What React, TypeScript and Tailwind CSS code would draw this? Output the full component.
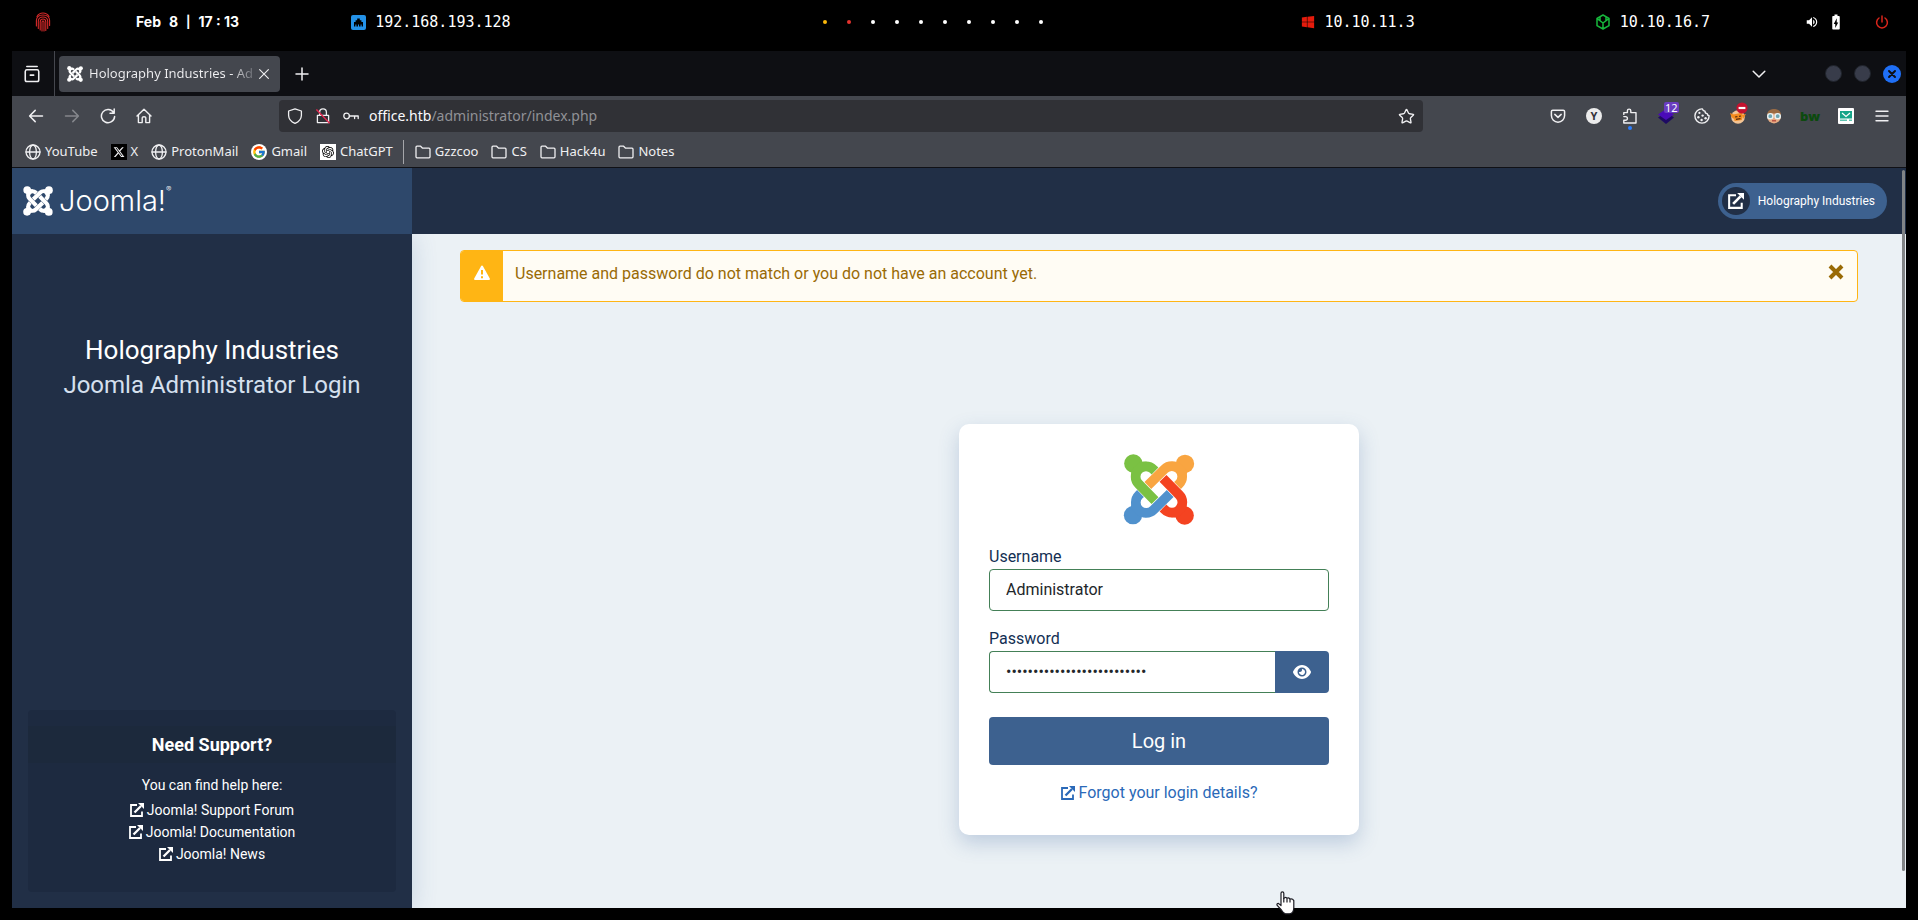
import React, { useState } from "react";
import { Star } from "lucide-react";
import { FaWindows, FaEye, FaXTwitter } from "react-icons/fa6";
import { FcGoogle } from "react-icons/fc";
import { SiOpenai } from "react-icons/si";
import { MdBatteryChargingFull, MdVolumeUp } from "react-icons/md";

type IconProps = { className?: string };

function Line({ className = "size-4", children }: IconProps & { children: React.ReactNode }) {
  return (
    <svg
      viewBox="0 0 16 16"
      className={className}
      fill="none"
      stroke="currentColor"
      strokeWidth="1.3"
      strokeLinecap="round"
      strokeLinejoin="round"
      aria-hidden="true"
    >
      {children}
    </svg>
  );
}

function JoomlaMark({ className, mono = false }: IconProps & { mono?: boolean }) {
  const parts = [
    { color: "#7ac143", turn: 0 },
    { color: "#f9a541", turn: 90 },
    { color: "#f44321", turn: 180 },
    { color: "#5091cd", turn: 270 },
  ];
  return (
    <svg viewBox="-2 0 214 213" className={className} aria-hidden="true">
      {parts.map(({ color, turn }) => (
        <g key={turn} transform={`rotate(${turn} 105 106.5)`}>
          <circle cx="28" cy="28.5" r="27.5" fill={mono ? "#fff" : color} />
          <path d="M50 20Q56 25 68 23L60 50 30 60 22 68Q25 57 20 50Z" fill={mono ? "#fff" : color} />
          <path
            d="M93 51L88 46A31 31 0 1 0 44 90L93 140"
            fill="none"
            stroke={mono ? "#fff" : color}
            strokeWidth="29"
          />
        </g>
      ))}
    </svg>
  );
}

function ExternalIcon({ className = "size-3.5" }: IconProps) {
  return (
    <svg viewBox="0 0 14 14" className={className} fill="none" stroke="currentColor" aria-hidden="true">
      <path d="M7 2H1V13H12V8.5" strokeWidth="1.8" />
      <path d="M4.5 9.5L11 3" strokeWidth="2.3" />
      <path d="M8 0H14V6Z" fill="currentColor" stroke="none" />
    </svg>
  );
}

function GlobeIcon() {
  return (
    <Line>
      <circle cx="8" cy="8" r="7" />
      <ellipse cx="8" cy="8" rx="3.4" ry="7" />
      <path d="M1 8H15" />
    </Line>
  );
}

function FolderIcon() {
  return (
    <Line>
      <path d="M1 12.8V3.2Q1 2.2 2 2.2H5.6L7.6 4.2H14Q15 4.2 15 5.2V12.8Q15 13.8 14 13.8H2Q1 13.8 1 12.8Z" />
    </Line>
  );
}

function StatusBar() {
  const dots = ["bg-[#fbb80a]", "bg-[#e5322d]", "bg-white", "bg-white", "bg-white", "bg-white", "bg-white", "bg-white", "bg-white", "bg-white"];
  return (
    <header className="flex h-[51px] items-start text-white">
      <div className="flex h-11 flex-1 items-center pl-[35px]">
        <svg viewBox="0 0 16 20" className="h-5 w-4 text-[#d62a2a]" fill="none" stroke="currentColor" strokeWidth="1.1" strokeLinecap="round" aria-label="Menu">
          <path d="M2 4.5Q4 1 8 1T14 4.5" />
          <path d="M1.4 14V8.5Q1.6 3 8 3T14.6 8.5V13.5" />
          <path d="M3.3 16.5V9Q3.6 5 8 5T12.7 9V16.5" />
          <path d="M5.2 18V9.6Q5.4 7 8 7T10.8 9.6V18.4" />
          <path d="M7 19V10Q7.2 9 8 9T9 10V19" />
        </svg>
        <time className="ml-[85px] flex gap-2 font-['Inter'] text-sm font-bold whitespace-nowrap">
          <span>Feb</span>
          <span>8</span>
          <span className="text-xs leading-5">|</span>
          <span>17 : 13</span>
        </time>
        <div className="ml-28 flex items-center gap-[9px]">
          <svg viewBox="0 0 15 15" className="size-[15px]" aria-hidden="true">
            <rect width="15" height="15" rx="2" fill="#2492e8" />
            <path d="M3 11.5V7H4.6V5.2H6.2V3.5H8.8V5.2H10.4V7H12V11.5H10.6V9.5H9.6V11.5H8V9.5H7V11.5H5.4V9.5H4.4V11.5Z" fill="#000" />
          </svg>
          <span className="font-['DejaVu_Sans_Mono'] text-[15px]">192.168.193.128</span>
        </div>
      </div>
      <div className="mr-[58px] flex h-11 items-center gap-5">
        {dots.map((color, i) => (
          <span key={i} className={`size-1 rounded-full ${color}`} />
        ))}
      </div>
      <div className="flex h-11 flex-1 items-center justify-end pr-[29px]">
        <div className="flex items-center gap-[9px]">
          <FaWindows className="size-3.5 text-[#e51b0c]" aria-hidden="true" />
          <span className="font-['DejaVu_Sans_Mono'] text-[15px]">10.10.11.3</span>
        </div>
        <div className="ml-[180px] flex items-center gap-[9px]">
          <svg viewBox="0 0 16 16" className="size-4 text-[#17b83c]" fill="none" stroke="currentColor" strokeWidth="1.5" strokeLinejoin="round" aria-hidden="true">
            <path d="M8 1L14 4.3V11.7L8 15 2 11.7V4.3ZM8 9V15M8 9L2.2 4.6M8 9L13.8 4.6M5 6.5V3M11 6.5V3" />
          </svg>
          <span className="font-['DejaVu_Sans_Mono'] text-[15px]">10.10.16.7</span>
        </div>
        <MdVolumeUp className="ml-[95px] size-3.5" aria-label="Volume" />
        <MdBatteryChargingFull className="ml-2 size-[18px]" aria-label="Battery" />
        <svg viewBox="0 0 14 14" className="ml-[30px] size-3.5 text-[#d9251b]" fill="none" stroke="currentColor" strokeWidth="1.5" strokeLinecap="round" aria-label="Power">
          <path d="M4 3A5.4 5.4 0 1 0 10 3M7 1V7" />
        </svg>
      </div>
    </header>
  );
}

function TabStrip() {
  return (
    <div className="flex h-[45px] items-center bg-[#0e0f13] pr-[5px]">
      <button aria-label="Recent browsing" className="flex h-full w-[42px] items-center justify-center pr-1.5 pl-1">
        <Line className="size-[18px]">
          <path d="M3.4 1.4H12.6M2 5.8Q2.2 4.2 3.4 4.2H12.6Q13.8 4.2 14 5.8V13Q14 14.6 12.6 14.6H3.4Q2 14.6 2 13ZM6.5 9H9.5" strokeWidth="1.4" />
        </Line>
      </button>
      <span className="h-full w-px bg-[#45474e]" />
      <div className="ml-1 flex h-9 w-[221px] items-center rounded bg-[#44474e] pl-2">
        <JoomlaMark mono className="size-4 shrink-0" />
        <span className="ml-1.5 flex-1 bg-linear-to-r from-[#f0f0f2] from-85% to-[#5c5f66] bg-clip-text whitespace-nowrap text-transparent">
          Holography Industries - Ad
        </span>
        <button aria-label="Close tab" className="mr-2 flex size-4 shrink-0 items-center justify-center">
          <Line className="size-3.5">
            <path d="M3 3L13 13M13 3L3 13" />
          </Line>
        </button>
      </div>
      <button aria-label="New tab" className="ml-1 flex size-9 items-center justify-center">
        <Line>
          <path d="M8 2V14M2 8H14" strokeWidth="1.5" />
        </Line>
      </button>
      <button aria-label="List all tabs" className="ml-auto flex size-9 items-center justify-center">
        <Line>
          <path d="M2.2 5.2L8 11 13.8 5.2" strokeWidth="1.5" />
        </Line>
      </button>
      <div className="ml-12 flex items-center gap-3">
        <button aria-label="Minimize" className="size-[17px] rounded-full border border-[#20242c] bg-[#383c4a]" />
        <button aria-label="Maximize" className="size-[17px] rounded-full border border-[#20242c] bg-[#383c4a]" />
        <button aria-label="Close window" className="flex size-[18px] items-center justify-center rounded-full bg-[#1f6ff5] text-[#0e0f13]">
          <Line className="size-3">
            <path d="M4 4L12 12M12 4L4 12" strokeWidth="2.6" />
          </Line>
        </button>
      </div>
    </div>
  );
}

function ToolButton({ label, dim = false, children }: { label: string; dim?: boolean; children: React.ReactNode }) {
  return (
    <button aria-label={label} className={`relative flex size-9 shrink-0 items-center justify-center ${dim ? "text-[#85878c]" : ""}`}>
      {children}
    </button>
  );
}

function Toolbar() {
  return (
    <div className="flex h-10 items-center px-1.5">
      <ToolButton label="Back">
        <Line><path d="M14.5 8H1.8M7.2 2.4L1.6 8 7.2 13.6" strokeWidth="1.5" /></Line>
      </ToolButton>
      <ToolButton label="Forward" dim>
        <Line><path d="M1.5 8H14.2M8.8 2.4L14.4 8 8.8 13.6" strokeWidth="1.5" /></Line>
      </ToolButton>
      <ToolButton label="Reload">
        <Line><path d="M13.6 4.6A6.6 6.6 0 1 0 14.6 8.6M14.2 1V5.2H10" strokeWidth="1.5" /></Line>
      </ToolButton>
      <ToolButton label="Home">
        <Line><path d="M1 8L8 1.2 15 8M2.4 7V14.6H6.2V9.8Q6.2 8.8 8 8.8T9.8 9.8V14.6H13.6V7" strokeWidth="1.4" /></Line>
      </ToolButton>
      <div className="mx-[117px] flex h-8 flex-1 items-center rounded bg-[#303136] px-2">
        <Line><path d="M8 .8L14.4 3V7.4Q14.2 12.6 8 15.4 1.8 12.6 1.6 7.4V3Z" /></Line>
        <svg viewBox="0 0 16 16" className="ml-3 size-4" fill="none" aria-label="Connection not secure">
          <path d="M4.6 7V4.2A3.4 3.4 0 0 1 11.4 4.2V7M2.4 7.4H13.6V14.6H2.4Z" stroke="currentColor" strokeWidth="1.3" strokeLinejoin="round" />
          <path d="M1.4 1.6L14.6 15.2" stroke="#e22850" strokeWidth="1.4" />
        </svg>
        <Line className="ml-3 size-4">
          <circle cx="3.6" cy="8" r="2.8" />
          <path d="M6.4 8H15.2V10.6M11.6 8V10.6" />
        </Line>
        <div role="textbox" tabIndex={0} aria-label="Address" className="ml-2.5 flex-1 text-sm text-[#909196]">
          <span className="text-[#fbfbfe]">office.htb</span>/administrator/index.php
        </div>
        <button aria-label="Bookmark this page">
          <Star className="size-[17px]" strokeWidth={1.9} />
        </button>
      </div>
      <ToolButton label="Save to Pocket">
        <Line><path d="M1.4 3.6Q1.4 2.2 2.8 2.2H13.2Q14.6 2.2 14.6 3.6V7.6A6.6 6.6 0 0 1 1.4 7.6ZM4.8 6.4L8 9.4 11.2 6.4" strokeWidth="1.5" /></Line>
      </ToolButton>
      <ToolButton label="Account">
        <span className="flex size-4 items-center justify-center rounded-full bg-[#ececec] text-[11px] font-bold text-[#33343a]">Y</span>
      </ToolButton>
      <ToolButton label="Extensions">
        <Line><path d="M1.8 6.4V4.6H5.4V2.8A1.7 1.7 0 0 1 8.8 2.8V4.6H14V15H1.8V12.2H3.6A1.8 1.8 0 0 0 3.6 8.6H1.8" strokeWidth="1.4" /></Line>
        <span className="absolute bottom-1 size-1 rounded-full bg-[#2a7dff]" />
      </ToolButton>
      <ToolButton label="Layers extension">
        <svg viewBox="0 0 16 16" className="size-4" aria-hidden="true">
          <path d="M0 9.5L8 4 16 9.5 8 16Z" fill="#1e0a63" />
          <path d="M0 6.5L8 1 16 6.5 8 12Z" fill="#4a0bb8" />
        </svg>
        <span className="absolute top-1 left-4 rounded-xs bg-[#6a3cc0] px-px text-[11px] leading-[11px] text-white">12</span>
      </ToolButton>
      <ToolButton label="Cookie editor">
        <svg viewBox="0 0 16 16" className="size-4" fill="none" stroke="currentColor" strokeWidth="1.4" strokeLinejoin="round" aria-hidden="true">
          <path d="M8.4 .9A7.1 7.1 0 1 0 15.1 7.8Q13.4 7.6 13.2 5.6 11 5.4 11 3.2 8.8 3 8.4 .9Z" />
          <g fill="currentColor" stroke="none">
            <circle cx="5.4" cy="4.9" r="1.1" />
            <circle cx="8.6" cy="7.6" r="1.2" />
            <circle cx="4.4" cy="9.2" r="1.2" />
            <circle cx="7.6" cy="12" r="1.2" />
            <circle cx="11.6" cy="10.2" r="1.2" />
          </g>
        </svg>
      </ToolButton>
      <ToolButton label="Proxy">
        <svg viewBox="0 0 16 16" className="size-4" aria-hidden="true">
          <circle cx="8" cy="9" r="6.8" fill="#f3c494" />
          <path d="M0 5L5 7 4 11 1.5 9ZM16 6L12 7 13 11Z" fill="#f38a1c" />
          <path d="M3.5 6.5L12.5 4.5 12 12 4.5 13Z" fill="#f58b1f" />
          <path d="M5 9L7.4 8.6M9 8.4L11 8M6 11.4L10.5 10.6" stroke="#5a2d0c" strokeWidth="1.1" />
        </svg>
        <svg viewBox="0 0 12 12" className="absolute top-1 left-4 size-3" aria-hidden="true">
          <circle cx="6" cy="6" r="5.6" fill="#c4122f" />
          <path d="M2.6 6H9.4" stroke="#fff" strokeWidth="2.2" />
        </svg>
      </ToolButton>
      <ToolButton label="User agent">
        <svg viewBox="0 0 16 16" className="size-4" aria-hidden="true">
          <circle cx="8" cy="8.4" r="7" fill="#e5ab83" />
          <path d="M1 8Q1 1 8 1T15 8L12 5.6H4Z" fill="#9a6b43" />
          <circle cx="4.3" cy="8.2" r="2.6" fill="#6fa5b0" stroke="#e9f3f5" strokeWidth="1.4" />
          <circle cx="11.7" cy="8.2" r="2.6" fill="#6fa5b0" stroke="#e9f3f5" strokeWidth="1.4" />
          <path d="M6 12.8H10" stroke="#b3453a" strokeWidth="1.3" />
        </svg>
      </ToolButton>
      <ToolButton label="bw">
        <span className="font-['Open_Sans'] text-[13px] leading-4 font-extrabold text-[#0c4a0e]">bw</span>
      </ToolButton>
      <ToolButton label="Temporary mail">
        <svg viewBox="0 0 16 16" className="size-4" aria-hidden="true">
          <rect width="16" height="16" rx="1" fill="#fff" />
          <path d="M2 3H14V10.5H2Z" fill="#17a589" />
          <path d="M4 5L8 8.4 12 5" fill="none" stroke="#fff" strokeWidth="1.2" />
          <path d="M2 12.2H9M11 12.2H14" stroke="#5fc4b0" strokeWidth="1.4" />
        </svg>
      </ToolButton>
      <ToolButton label="Application menu">
        <Line><path d="M2 3.2H14M2 8H14M2 12.8H14" strokeWidth="1.4" /></Line>
      </ToolButton>
    </div>
  );
}

function Bookmark({ icon, children }: { icon: React.ReactNode; children: React.ReactNode }) {
  return (
    <a href="#" className="flex items-center gap-1">
      {icon}
      {children}
    </a>
  );
}

function BookmarkBar() {
  return (
    <nav aria-label="Bookmarks" className="flex h-8 items-center gap-[13px] border-b border-[#101116] pl-[13px]">
      <Bookmark icon={<GlobeIcon />}>YouTube</Bookmark>
      <Bookmark icon={<span className="flex size-4 items-center justify-center bg-black"><FaXTwitter className="size-3" /></span>}>X</Bookmark>
      <Bookmark icon={<GlobeIcon />}>ProtonMail</Bookmark>
      <Bookmark icon={<span className="flex size-4 items-center justify-center rounded-full bg-white"><FcGoogle className="size-3.5" /></span>}>Gmail</Bookmark>
      <Bookmark icon={<span className="flex size-4 items-center justify-center bg-white text-black"><SiOpenai className="size-3" /></span>}>ChatGPT</Bookmark>
      <span className="-mr-0.5 -ml-[3px] h-6 w-px bg-[#a5a6aa]" />
      <Bookmark icon={<FolderIcon />}>Gzzcoo</Bookmark>
      <Bookmark icon={<FolderIcon />}>CS</Bookmark>
      <Bookmark icon={<FolderIcon />}>Hack4u</Bookmark>
      <Bookmark icon={<FolderIcon />}>Notes</Bookmark>
    </nav>
  );
}

function LoginCard() {
  const [user, setUser] = useState("Administrator");
  const [secret, setSecret] = useState("abcdefghijklmnopqrstuvwxyz");
  return (
    <form
      className="w-[400px] rounded-[10px] bg-white p-[30px] text-[#132f53] shadow-[0_8px_20px_rgba(57,95,155,0.25)]"
      onSubmit={(e) => e.preventDefault()}
    >
      <JoomlaMark className="mx-auto h-[71px] w-[72px]" />
      <label htmlFor="username" className="mt-5 block leading-6">Username</label>
      <input
        id="username"
        value={user}
        onChange={(e) => setUser(e.target.value)}
        className="h-[42px] w-full rounded border border-[#448057] bg-white px-4 text-[#22262a] outline-none"
      />
      <label htmlFor="password" className="mt-4 block leading-6">Password</label>
      <div className="flex">
        <input
          id="password"
          type="password"
          value={secret}
          onChange={(e) => setSecret(e.target.value)}
          className="h-[42px] min-w-0 flex-1 rounded-l border border-r-0 border-[#448057] bg-white px-4 text-[#22262a] outline-none"
        />
        <button type="button" aria-label="Show password" className="flex w-[54px] items-center justify-center rounded-r bg-[#3d618f] text-white">
          <FaEye className="size-[18px]" />
        </button>
      </div>
      <button type="submit" className="mt-6 h-12 w-full rounded bg-[#3d618f] text-xl text-white">Log in</button>
      <a href="#" className="mt-4 flex items-center justify-center gap-1 leading-6 text-[#2a69b8]">
        <ExternalIcon />
        Forgot your login details?
      </a>
    </form>
  );
}

function Sidebar() {
  return (
    <aside className="z-10 flex w-[400px] shrink-0 flex-col bg-[#212f46] text-center text-white shadow-[0_2px_24px_rgba(57,95,155,0.2)]">
      <div className="mt-[98px]">
        <h1 className="text-[26px] leading-9">Holography Industries</h1>
        <p className="text-2xl leading-[34px] text-[#d5e0ee]">Joomla Administrator Login</p>
      </div>
      <section className="m-4 mt-auto rounded bg-[#1d2a40] pt-4 pb-[27px]">
        <h2 className="bg-[#1c293c] text-lg leading-[37px] font-bold">Need Support?</h2>
        <p className="mt-3 text-sm leading-5">You can find help here:</p>
        <ul className="mt-1 text-sm leading-[22px]">
          {["Joomla! Support Forum", "Joomla! Documentation", "Joomla! News"].map((name) => (
            <li key={name}>
              <a href="#" className="flex items-center justify-center gap-[3px]">
                <ExternalIcon />
                {name}
              </a>
            </li>
          ))}
        </ul>
      </section>
    </aside>
  );
}

function JoomlaPage() {
  return (
    <div className="relative flex flex-1 flex-col bg-[#ebf1f5] font-['Roboto',sans-serif] text-base text-white">
      <div className="flex h-[66px] items-center bg-[#212f46]">
        <a href="#" aria-label="Joomla!" className="flex h-full w-[400px] items-center gap-1.5 bg-[#2e486b] pl-[11px]">
          <JoomlaMark mono className="size-[30px]" />
          <span className="flex font-['Inter'] text-[29px] leading-8 font-light">
            Joomla!<sup className="mt-1 text-[8px] leading-none">®</sup>
          </span>
        </a>
        <a href="#" className="mr-[19px] ml-auto flex h-9 items-center gap-2 rounded-full bg-[#3d618f] pr-3 pl-1 text-xs">
          <span className="flex size-7 items-center justify-center rounded-full bg-[#212f46]">
            <ExternalIcon className="size-4" />
          </span>
          Holography Industries
        </a>
      </div>
      <div className="flex flex-1 overflow-hidden">
        <Sidebar />
        <main className="flex flex-1 flex-col px-12 pt-4">
          <div role="alert" className="flex h-[52px] overflow-hidden rounded border border-[#ffb514] bg-[#fffcf4] text-[#996a05]">
            <span className="flex w-[42px] items-center justify-center bg-[#ffb514] pb-1.5 text-white">
              <svg viewBox="0 0 16 16" className="size-4" aria-hidden="true">
                <path d="M8 .6Q8.7.6 9 1.2L15.8 13.6Q16.2 14.9 15 15H1Q-.2 14.9.2 13.6L7 1.2Q7.3.6 8 .6Z" fill="#fff" />
                <path d="M8 5V9.6M8 11.2V13.2" stroke="#ffb514" strokeWidth="2" />
              </svg>
            </span>
            <p className="flex-1 px-3 py-[11px] leading-6">Username and password do not match or you do not have an account yet.</p>
            <button aria-label="Close" className="mr-[13px] mb-2 flex items-center">
              <svg viewBox="0 0 16 16" className="size-4" stroke="#996a05" strokeWidth="4" aria-hidden="true">
                <path d="M2 2L14 14M14 2L2 14" />
              </svg>
            </button>
          </div>
          <div className="flex flex-1 items-center justify-center pt-12">
            <LoginCard />
          </div>
        </main>
      </div>
      <span className="absolute top-0.5 right-px bottom-[37px] w-[3px] rounded-full bg-[#818486]" />
      <svg viewBox="0 0 19 24" className="absolute -bottom-[7px] left-[1264px] h-6 w-[19px]" fill="#fff" stroke="#1b1b22" strokeWidth="1.2" strokeLinejoin="round" aria-hidden="true">
        <path d="M5 14.5V2.2Q5 .8 6.4 .8T7.8 2.2V7.5Q9 5.6 11 7.2 12.6 6.2 14 8 16.6 7.4 17.8 9.6V17Q17.6 22.4 13.6 22.8H9.4Q7.4 22.4 5.4 19L1 14.2Q.6 12.4 2.4 12.4Z" />
        <path d="M7.8 7V11.5M11 7.4V11.5M14 8V11.5" fill="none" />
      </svg>
    </div>
  );
}

export default function App() {
  return (
    <div className="flex min-h-screen flex-col bg-black">
      <StatusBar />
      <div className="mx-3 mb-3 flex flex-1 flex-col bg-[#44474e] font-['Noto_Sans',sans-serif] text-[13px] text-[#f0f0f2]">
        <TabStrip />
        <Toolbar />
        <BookmarkBar />
        <JoomlaPage />
      </div>
    </div>
  );
}
